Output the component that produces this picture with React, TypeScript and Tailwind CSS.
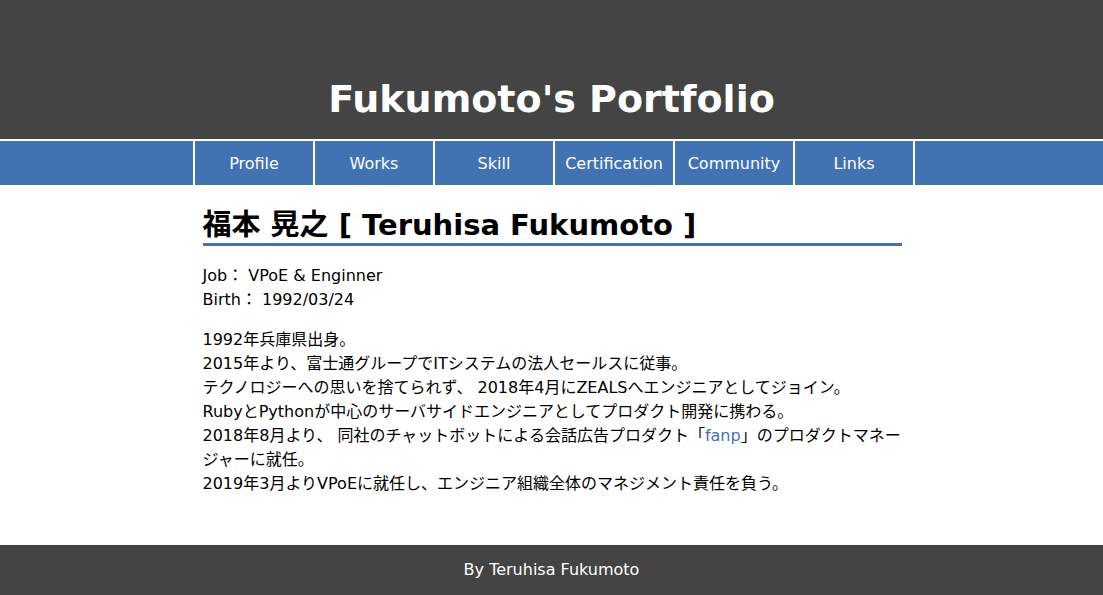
const NAV_ITEMS = ["Profile", "Works", "Skill", "Certification", "Community", "Links"];

export default function App() {
  return (
    <div className="min-h-[595px] flex flex-col bg-white text-black font-['DejaVu_Sans','Noto_Sans_CJK_JP',sans-serif]">
      <header className="h-[141px] bg-[#444444] flex items-end justify-center pb-[18px] border-b-2 border-white">
        <h1 className="text-[38px] font-bold text-white leading-[44px]">Fukumoto's Portfolio</h1>
      </header>

      <nav className="bg-[#4072b4] h-[44px] flex justify-center">
        <ul className="flex h-full ml-[5px] border-r-2 border-white">
          {NAV_ITEMS.map((item) => (
            <li key={item} className="w-[120px] h-full border-l-2 border-white flex items-center justify-center text-white text-[16px] pt-[1px]">
              {item}
            </li>
          ))}
        </ul>
      </nav>

      <main className="flex-1 w-[700px] mx-auto pl-[1px] pt-[23px] text-[16px] leading-[24px]">
        <h2 className="text-[29px] font-bold leading-[34px] border-b-[3px] border-[#4072b4] pb-[1px]">
          福本 晃之 [ Teruhisa Fukumoto ]
        </h2>
        <div className="mt-[18px]">
          <p>Job： VPoE &amp; Enginner</p>
          <p>Birth： 1992/03/24</p>
        </div>
        <div className="mt-[16px]">
          <p>1992年兵庫県出身。</p>
          <p>2015年より、富士通グループでITシステムの法人セールスに従事。</p>
          <p>テクノロジーへの思いを捨てられず、 2018年4月にZEALSへエンジニアとしてジョイン。</p>
          <p>RubyとPythonが中心のサーバサイドエンジニアとしてプロダクト開発に携わる。</p>
          <p>
            2018年8月より、 同社のチャットボットによる会話広告プロダクト「<a href="#" className="text-[#4072b4]">fanp</a>」のプロダクトマネージャーに就任。
          </p>
          <p>2019年3月よりVPoEに就任し、エンジニア組織全体のマネジメント責任を負う。</p>
        </div>
      </main>

      <footer className="h-[50px] bg-[#444444] flex items-center justify-center text-white text-[16px]">
        By Teruhisa Fukumoto
      </footer>
    </div>
  );
}
